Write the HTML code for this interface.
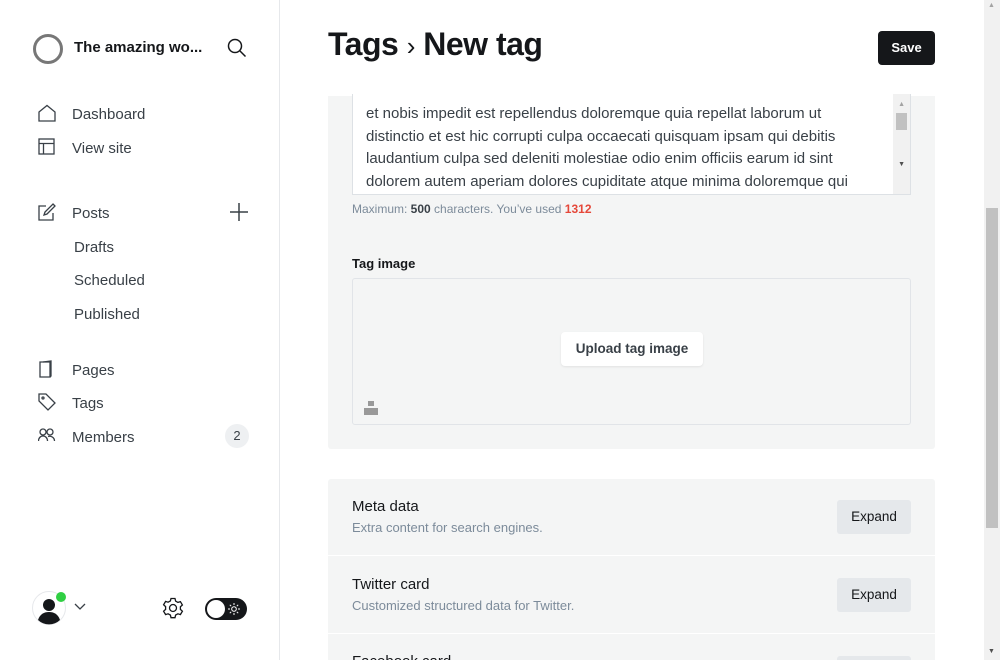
<!DOCTYPE html>
<html><head><meta charset="utf-8"><style>
*{box-sizing:border-box;margin:0;padding:0}
html,body{width:1000px;height:660px;overflow:hidden}
body{background:#fff;font-family:"Liberation Sans",sans-serif;color:#15171a;position:relative}
.side{position:absolute;left:0;top:0;width:280px;height:660px;border-right:1px solid #e6e8eb}
.abs{position:absolute}
.nav{position:absolute;left:72px;font-size:15px;color:#394047;margin-top:2px}
.ic{position:absolute;left:38px}
.main{position:absolute}
.sb{position:absolute;left:984px;top:0;width:16px;height:660px;background:#f1f1f1}
</style></head><body>
<div class="side">
 <svg class="abs" style="left:32px;top:33px" width="32" height="32"><circle cx="16" cy="16" r="13.5" fill="none" stroke="#777" stroke-width="3"/></svg>
 <div class="abs" style="left:74px;top:39px;font-size:15px;font-weight:bold;color:#15171a">The amazing wo...</div>
 <svg class="abs" style="left:227px;top:38px" width="20" height="20" fill="none" stroke="#15171a" stroke-width="1.5"><circle cx="8" cy="8" r="6.5"/><path d="M13 13l5.5 5.5"/></svg>
 <svg class="ic" style="top:104px" width="18" height="18" fill="none" stroke="#394047" stroke-width="1.3"><path d="M1 8L9 1.5 17 8v9H1z"/></svg>
 <div class="nav" style="top:104px">Dashboard</div>
 <svg class="ic" style="top:138px" width="18" height="18" fill="none" stroke="#394047" stroke-width="1.3"><rect x="1" y="1" width="15" height="15"/><path d="M1 5.5h15M5.5 5.5V16"/></svg>
 <div class="nav" style="top:138px">View site</div>
 <svg class="ic" style="top:203px" width="18" height="18" fill="none" stroke="#394047" stroke-width="1.3"><path d="M8 3H1v14h14v-7"/><path d="M15 1l2 2-8 8-3 1 1-3z"/></svg>
 <div class="nav" style="top:203px">Posts</div>
 <svg class="abs" style="left:229px;top:202px" width="20" height="20" stroke="#394047" stroke-width="1.5"><path d="M10 1v18M1 10h18"/></svg>
 <div class="nav" style="top:237px;left:74px">Drafts</div>
 <div class="nav" style="top:270px;left:74px">Scheduled</div>
 <div class="nav" style="top:304px;left:74px">Published</div>
 <svg class="ic" style="top:360px" width="18" height="18" fill="none" stroke="#394047" stroke-width="1.3"><path d="M2 2h10v15H2z"/><path d="M5 2l8-1v15l-1 1"/></svg>
 <div class="nav" style="top:360px">Pages</div>
 <svg class="ic" style="top:393px" width="18" height="18" fill="none" stroke="#394047" stroke-width="1.3"><path d="M1 1h7l9 9-7 7-9-9z"/><circle cx="5" cy="5" r="1"/></svg>
 <div class="nav" style="top:393px">Tags</div>
 <svg class="ic" style="top:428px" width="18" height="16" fill="none" stroke="#394047" stroke-width="1.3"><circle cx="5" cy="4" r="3"/><path d="M0.5 13c0-3 2-5 4.5-5s4.5 2 4.5 5"/><circle cx="12" cy="4" r="3"/><path d="M10 8.5c3 -1 6.5 1 6.5 4.5"/></svg>
 <div class="nav" style="top:427px">Members</div>
 <div class="abs" style="left:225px;top:424px;width:24px;height:24px;border-radius:12px;background:#eef0f2;font-size:13px;text-align:center;line-height:24px;color:#394047">2</div>
 <svg class="abs" style="left:32px;top:591px" width="34" height="34"><circle cx="17" cy="17" r="16.5" fill="#fff" stroke="#e6e8eb"/><circle cx="17" cy="14" r="6" fill="#15171a"/><path d="M6 29c2-6 6-8 11-8s9 2 11 8a16 16 0 0 1-22 0z" fill="#15171a"/><circle cx="29" cy="6" r="5" fill="#30cf43"/></svg>
 <svg class="abs" style="left:74px;top:603px" width="12" height="8" fill="none" stroke="#394047" stroke-width="1.3"><path d="M1 1l5 5 5-5"/></svg>
 <svg class="abs" style="left:162px;top:597px" width="22" height="22" fill="none" stroke="#15171a" stroke-width="1.3"><circle cx="11" cy="11" r="3.5"/><path d="M9 1.5h4l.6 2.6 2.3 1.3 2.5-.8 2 3.4-2 1.8v2.6l2 1.8-2 3.4-2.5-.8-2.3 1.3-.6 2.6H9l-.6-2.6-2.3-1.3-2.5.8-2-3.4 2-1.8V9.6l-2-1.8 2-3.4 2.5.8 2.3-1.3z"/></svg>
 <div class="abs" style="left:205px;top:598px;width:42px;height:22px;border-radius:11px;background:#15171a"></div>
 <div class="abs" style="left:207px;top:600px;width:18px;height:18px;border-radius:9px;background:#fff"></div>
 <svg class="abs" style="left:228px;top:603px" width="12" height="12" stroke="#fff" stroke-width="1"><circle cx="6" cy="6" r="2.3" fill="none"/><path d="M6 0v2M6 10v2M0 6h2M10 6h2M1.8 1.8l1.4 1.4M8.8 8.8l1.4 1.4M1.8 10.2l1.4-1.4M8.8 3.2l1.4-1.4"/></svg>
</div>

<div class="main" style="left:328px;top:96px;width:607px;height:353px;background:#f4f5f5;border-radius:0 0 3px 3px"></div>
<div class="main" style="left:352px;top:94px;width:559px;height:101px;background:#fff;border:1px solid #dde1e5;border-top:none;overflow:hidden">
 <div style="padding:9px 0 0 13px;font-size:15px;line-height:22.6px;color:#394047;width:505px">et nobis impedit est repellendus doloremque quia repellat laborum ut distinctio et est hic corrupti culpa occaecati quisquam ipsam qui debitis laudantium culpa sed deleniti molestiae odio enim officiis earum id sint dolorem autem aperiam dolores cupiditate atque minima doloremque qui</div>
 <div class="abs" style="right:0;top:0;width:17px;height:100px;background:#f1f1f1"></div>
 <div class="abs" style="right:3px;top:19px;width:11px;height:17px;background:#c1c1c1"></div>
 <div class="abs" style="right:5px;top:7px;font-size:7px;color:#a3a3a3">▲</div>
 <div class="abs" style="right:5px;top:67px;font-size:7px;color:#505050">▼</div>
</div>
<div class="abs" style="left:352px;top:202px;font-size:12px;color:#7c8b9a">Maximum: <b style="color:#394047">500</b> characters. You’ve used <b style="color:#e5483a">1312</b></div>
<div class="abs" style="left:352px;top:256px;font-size:13px;font-weight:bold;color:#15171a">Tag image</div>
<div class="abs" style="left:352px;top:278px;width:559px;height:147px;border:1px solid #e1e4e8;border-radius:3px;background:#f4f5f5"></div>
<div class="abs" style="left:561px;top:332px;width:142px;height:34px;background:#fff;border-radius:4px;box-shadow:0 1px 2px rgba(0,0,0,.08);font-size:13.5px;font-weight:bold;color:#394047;text-align:center;line-height:34px">Upload tag image</div>
<svg class="abs" style="left:364px;top:401px" width="14" height="14" fill="#999"><rect x="4" y="0" width="6" height="5"/><rect x="0" y="7" width="14" height="7"/></svg>

<div class="abs" style="left:328px;top:26px;font-size:32px;font-weight:bold;letter-spacing:-0.5px">Tags <span style="font-weight:normal;font-size:26px">›</span> New tag</div>
<div class="abs" style="left:878px;top:31px;width:57px;height:34px;background:#15171a;border-radius:4px;color:#fff;font-size:13px;font-weight:bold;text-align:center;line-height:34px">Save</div>

<div class="abs" style="left:328px;top:479px;width:607px;height:190px;background:#f4f5f5;border-radius:3px"></div>
<div class="abs" style="left:328px;top:555px;width:607px;height:1px;background:#fff"></div>
<div class="abs" style="left:328px;top:633px;width:607px;height:1px;background:#fff"></div>
<div class="abs" style="left:352px;top:498px;font-size:15px">Meta data</div>
<div class="abs" style="left:352px;top:520px;font-size:13px;color:#7c8b9a">Extra content for search engines.</div>
<div class="abs" style="left:837px;top:500px;width:74px;height:34px;background:#e5e8eb;border-radius:3px;font-size:13.5px;text-align:center;line-height:34px">Expand</div>
<div class="abs" style="left:352px;top:576px;font-size:15px">Twitter card</div>
<div class="abs" style="left:352px;top:598px;font-size:13px;color:#7c8b9a">Customized structured data for Twitter.</div>
<div class="abs" style="left:837px;top:578px;width:74px;height:34px;background:#e5e8eb;border-radius:3px;font-size:13.5px;text-align:center;line-height:34px">Expand</div>
<div class="abs" style="left:352px;top:653px;font-size:15px">Facebook card</div>
<div class="abs" style="left:837px;top:656px;width:74px;height:34px;background:#e5e8eb;border-radius:3px"></div>

<div class="sb"><div class="abs" style="left:2px;top:208px;width:12px;height:320px;background:#c1c1c1"></div>
<div class="abs" style="left:4px;top:2px;font-size:7px;color:#a3a3a3">▲</div>
<div class="abs" style="left:4px;top:648px;font-size:7px;color:#505050">▼</div></div>
</body></html>
